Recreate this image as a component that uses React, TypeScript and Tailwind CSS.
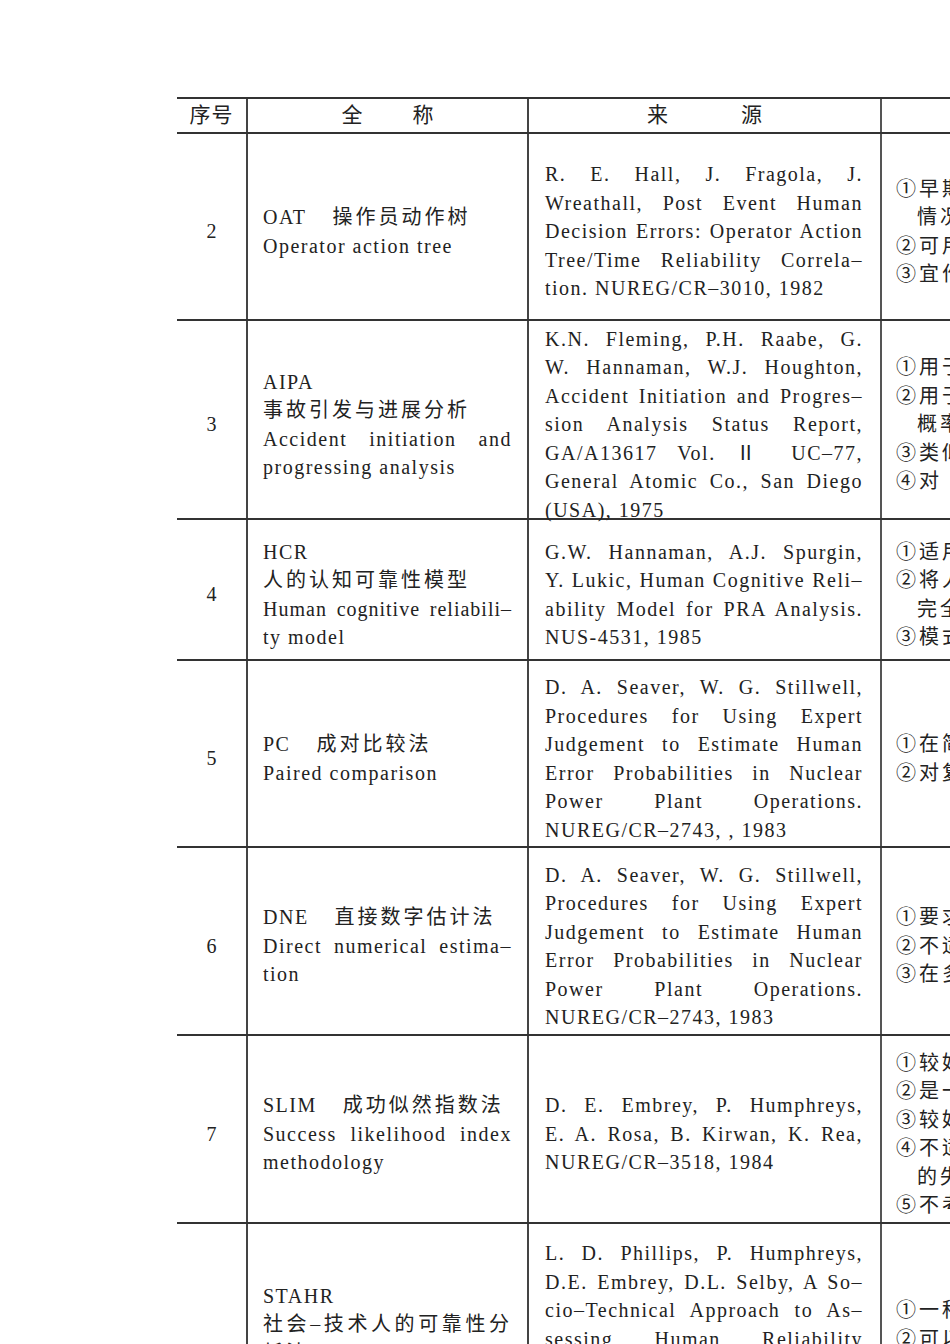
import type { ReactNode } from 'react';

type NameLine = { text: ReactNode; justify?: boolean; tight?: boolean };

interface MethodRow {
  no: string;
  height: string;
  name: NameLine[];
  source: string[];
  notes: string[];
}

function Zh({ children }: { children: ReactNode }) {
  return <span className="tracking-[3px]">{children}</span>;
}

function Title({ abbr, zh }: { abbr: string; zh: string }) {
  return (
    <>
      <span>{abbr}</span>
      <span className="ml-[26px] tracking-[3px]">{zh}</span>
    </>
  );
}

const rows: MethodRow[] = [
  {
    no: '2',
    height: 'h-[187px]',
    name: [
      { text: <Title abbr="OAT" zh="操作员动作树" /> },
      { text: 'Operator action tree' },
    ],
    source: [
      'R. E. Hall, J. Fragola, J.',
      'Wreathall, Post Event Human',
      'Decision Errors: Operator Action',
      'Tree/Time Reliability Correla–',
      'tion. NUREG/CR–3010, 1982',
    ],
    notes: ['①早期的人误分析方法，适用于事故后', '　情况下操作员的诊断响应', '②可用于诊断失误分析', '③宜作为时间可靠性关系的基础'],
  },
  {
    no: '3',
    height: 'h-[199px]',
    name: [
      { text: 'AIPA' },
      { text: <Zh>事故引发与进展分析</Zh> },
      { text: 'Accident initiation and', justify: true },
      { text: 'progressing analysis' },
    ],
    source: [
      'K.N. Fleming, P.H. Raabe, G.',
      'W. Hannaman, W.J. Houghton,',
      'Accident Initiation and Progres–',
      'sion Analysis Status Report,',
      'GA/A13617 Vol. Ⅱ UC–77,',
      'General Atomic Co., San Diego',
      '(USA), 1975',
    ],
    notes: ['①用于事故引发与进展分析', '②用于估计操作员未能及时响应的', '　概率', '③类似于OAT方法', '④对 数据要求较高'],
  },
  {
    no: '4',
    height: 'h-[141px]',
    name: [
      { text: 'HCR' },
      { text: <Zh>人的认知可靠性模型</Zh> },
      { text: 'Human cognitive reliabili–', justify: true, tight: true },
      { text: 'ty model' },
    ],
    source: [
      'G.W. Hannaman, A.J. Spurgin,',
      'Y. Lukic, Human Cognitive Reli–',
      'ability Model for PRA Analysis.',
      'NUS-4531, 1985',
    ],
    notes: ['①适用于PRA分析', '②将人的行为分为技能型、规则型和', '　完全知识型', '③模式化的时间可靠性曲线'],
  },
  {
    no: '5',
    height: 'h-[187px]',
    name: [
      { text: <Title abbr="PC" zh="成对比较法" /> },
      { text: 'Paired comparison' },
    ],
    source: [
      'D. A. Seaver, W. G. Stillwell,',
      'Procedures for Using Expert',
      'Judgement to Estimate Human',
      'Error Probabilities in Nuclear',
      'Power Plant Operations.',
      'NUREG/CR–2743, , 1983',
    ],
    notes: ['①在简单任务中效果较好', '②对复杂任务适用性较差'],
  },
  {
    no: '6',
    height: 'h-[188px]',
    name: [
      { text: <Title abbr="DNE" zh="直接数字估计法" /> },
      { text: 'Direct numerical estima–', justify: true },
      { text: 'tion' },
    ],
    source: [
      'D. A. Seaver, W. G. Stillwell,',
      'Procedures for Using Expert',
      'Judgement to Estimate Human',
      'Error Probabilities in Nuclear',
      'Power Plant Operations.',
      'NUREG/CR–2743, 1983',
    ],
    notes: ['①要求专家给出直接估计', '②不适用于缺少经验的场合', '③在多数情况下偏差较大'],
  },
  {
    no: '7',
    height: 'h-[188px]',
    name: [
      { text: <Title abbr="SLIM" zh="成功似然指数法" /> },
      { text: 'Success likelihood index', justify: true },
      { text: 'methodology' },
    ],
    source: [
      'D. E. Embrey, P. Humphreys,',
      'E. A. Rosa, B. Kirwan, K. Rea,',
      'NUREG/CR–3518, 1984',
    ],
    notes: ['①较好地利用了专家判断', '②是一种灵活的方法', '③较好地考虑了PSF', '④不适用于缺少数据', '　的失误类型', '⑤不考虑任务间的相关性'],
  },
  {
    no: '8',
    height: 'h-[250px]',
    name: [
      { text: 'STAHR' },
      { text: <Zh>社会–技术人的可靠性分</Zh>, justify: true },
      { text: <Zh>析法</Zh> },
      { text: 'Socio-technical assess–', justify: true },
      { text: 'ment of human reliability' },
    ],
    source: [
      'L. D. Phillips, P. Humphreys,',
      'D.E. Embrey, D.L. Selby, A So–',
      'cio–Technical Approach to As–',
      'sessing Human Reliability',
      '(STAHR), in Handbook of Hu–',
      'man Reliability Analysis with',
      'Emphasis on Nuclear Power',
      'Plant Applications, 1985',
    ],
    notes: ['①一种社会技术方法', '②可以处理组织因素问', '　题：如管理与培训', '③需要多位专家参与'],
  },
];

const justified = 'text-justify [text-align-last:justify]';

export default function App() {
  return (
    <div className="w-[950px] h-[1344px] overflow-hidden bg-white text-[#222] font-['Liberation_Serif','Noto_Sans_CJK_SC',serif]">
      <div className="ml-[177px] mt-[97px] w-[1100px] border-t-2 border-[#333]">
        {/* header */}
        <div className="flex h-[35px] border-b-2 border-[#333] text-[21px] leading-none">
          <div className="w-[71px] shrink-0 border-r-2 border-[#444] flex items-center justify-center tracking-[1px]">
            序号
          </div>
          <div className="w-[281px] shrink-0 border-r-2 border-[#444] flex items-center justify-center">
            <span>全</span>
            <span className="ml-[50px]">称</span>
          </div>
          <div className="w-[353px] shrink-0 border-r-2 border-[#555] flex items-center justify-center">
            <span>来</span>
            <span className="ml-[73px]">源</span>
          </div>
          <div className="w-[300px] shrink-0 flex items-center justify-center">
            <span>特</span>
            <span className="ml-[60px]">点</span>
          </div>
        </div>

        {rows.map((row) => (
          <div key={row.no} className={`flex ${row.height} border-b-2 border-[#333] text-[20px] leading-[28.5px]`}>
            <div className="w-[71px] shrink-0 border-r-2 border-[#444] flex items-center justify-center pt-[10px]">
              {row.no}
            </div>
            <div className="w-[281px] shrink-0 border-r-2 border-[#444] flex flex-col justify-center pt-[10px] pl-[15px] pr-[15px] tracking-[1.5px]">
              {row.name.map((line, i) => (
                <div
                  key={i}
                  className={`${line.justify ? justified : 'whitespace-nowrap'} ${line.tight ? 'tracking-[1px]' : ''}`}
                >
                  {line.text}
                </div>
              ))}
            </div>
            <div className="w-[353px] shrink-0 border-r-2 border-[#555] flex flex-col justify-center pt-[10px] pl-[16px] pr-[17px] tracking-[1.5px]">
              {row.source.map((line, i) => (
                <div key={i} className={i < row.source.length - 1 ? justified : 'whitespace-nowrap'}>
                  {line}
                </div>
              ))}
            </div>
            <div className="w-[300px] shrink-0 flex flex-col justify-center pt-[10px] pl-[14px] tracking-[3px] overflow-hidden">
              {row.notes.map((line, i) =>
                line.startsWith('　') ? (
                  <div key={i} className="whitespace-nowrap pl-[21px]">
                    {line.slice(1)}
                  </div>
                ) : (
                  <div key={i} className="whitespace-nowrap">
                    {line}
                  </div>
                )
              )}
            </div>
          </div>
        ))}
      </div>
    </div>
  );
}
